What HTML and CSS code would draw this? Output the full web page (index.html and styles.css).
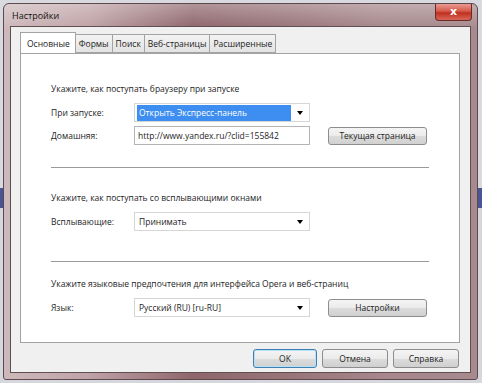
FILE: index.html
```html
<!DOCTYPE html>
<html lang="ru">
<head>
    <meta charset="UTF-8">
    <title>Настройки</title>
    <link rel="stylesheet" href="styles.css">
</head>
<body>
    <div class="window">
        <div class="titlebar">
            <span class="title">Настройки</span>
            <button class="close">x</button>
        </div>
        <div class="client">
            <ul class="tabs">
                <li class="tab active">Основные</li>
                <li class="tab">Формы</li>
                <li class="tab">Поиск</li>
                <li class="tab">Веб-страницы</li>
                <li class="tab">Расширенные</li>
            </ul>
            <div class="panel">
                <div class="section first">
                    <p class="heading">Укажите, как поступать браузеру при запуске</p>
                    <div class="row">
                        <span class="label">При запуске:</span>
                        <div class="select"><span class="value selected">Открыть Экспресс-панель</span><span class="arrow"></span></div>
                    </div>
                    <div class="row">
                        <span class="label">Домашняя:</span>
                        <div class="input">http://www.yandex.ru/?clid=155842</div>
                        <button class="btn">Текущая страница</button>
                    </div>
                </div>
                <hr class="sep">
                <div class="section second">
                    <p class="heading">Укажите, как поступать со всплывающими окнами</p>
                    <div class="row">
                        <span class="label">Всплывающие:</span>
                        <div class="select"><span class="value">Принимать</span><span class="arrow"></span></div>
                    </div>
                </div>
                <hr class="sep sep2">
                <div class="section third">
                    <p class="heading">Укажите языковые предпочтения для интерфейса Opera и веб-страниц</p>
                    <div class="row">
                        <span class="label">Язык:</span>
                        <div class="select"><span class="value">Русский (RU) [ru-RU]</span><span class="arrow"></span></div>
                        <button class="btn">Настройки</button>
                    </div>
                </div>
            </div>
            <div class="actions">
                <button class="btn default">OK</button>
                <button class="btn">Отмена</button>
                <button class="btn">Справка</button>
            </div>
        </div>
    </div>
</body>
</html>
```
FILE: styles.css
```css
body {
    margin: 0;
    width: 482px;
    height: 383px;
    overflow: hidden;
    font-family: "Open Sans", "Noto Sans", sans-serif;
    font-size: 8.5px;
    white-space: nowrap;
    color: #1e1e1e;
    background: linear-gradient(#d9dadf 0, #d9dadf 188px, #4a5597 188px, #4a5597 208px, #d6d7dc 208px);
}
.window {
    margin: 3px;
    padding: 0 6px 6px 6px;
    border-radius: 6px 6px 3px 3px;
    border: 1px solid #5e4a4e;
    width: 461px;
    height: 369px;
    background:
        linear-gradient(rgba(255,255,255,0.3), rgba(255,255,255,0) 24px),
        linear-gradient(90deg, #cdb9bb 0%, #bfa2a6 18%, #8e666c 40%, #987479 60%, #a6878b 80%, #a68a8e 100%);
    display: flex;
    flex-direction: column;
}
.titlebar {
    height: 22px;
    display: flex;
    align-items: flex-start;
    justify-content: space-between;
}
.title {
    margin: 5px 0 0 2px;
    font-size: 9px;
    color: #111;
}
.close {
    width: 37px;
    height: 17px;
    margin: 0 -1px 0 0;
    padding: 0;
    border: 1px solid #6a2a26;
    border-top: none;
    border-radius: 0 0 4px 4px;
    background: linear-gradient(#e99a90, #d45a4c 45%, #c0301f 55%, #d8675a);
    color: #fff;
    font-family: "DejaVu Sans", sans-serif;
    font-weight: bold;
    font-size: 11px;
    line-height: 14px;
}
.client {
    flex: 1;
    background: #f0f0f0;
    border: 1px solid #5f4e52;
    padding: 7px 10px 0 9px;
    display: flex;
    flex-direction: column;
}
.tabs {
    list-style: none;
    margin: 0;
    padding: 0;
    display: flex;
    height: 19px;
    position: relative;
    z-index: 1;
}
.tab {
    box-sizing: border-box;
    height: 19px;
    padding: 0 3px;
    line-height: 18px;
    border: 1px solid #a3a3a3;
    border-left: none;
    background: linear-gradient(#f3f3f3, #e3e3e3);
    color: #222;
}
.tab.active {
    height: 21px;
    margin-top: -2px;
    padding: 0 5px 0 6px;
    line-height: 22px;
    border-left: 1px solid #a3a3a3;
    border-bottom: none;
    background: #fff;
}
.panel {
    height: 290px;
    box-sizing: border-box;
    background: #fff;
    border: 1px solid #a3a3a3;
    padding: 0 30px;
}
.section.first {
    padding-top: 28px;
}
.section.second {
    padding-top: 23px;
}
.section.third {
    padding-top: 15px;
}
.heading {
    margin: 0 0 7px 0;
    line-height: 14px;
}
.row {
    display: flex;
    align-items: center;
    margin-bottom: 4px;
}
.label {
    width: 83px;
}
.select, .input {
    box-sizing: border-box;
    width: 176px;
    height: 19px;
    border: 1px solid #d6d6d6;
    background: #fff;
    display: flex;
    align-items: center;
    padding: 0 2px;
}
.input {
    border-color: #b4b4b4;
    padding: 0 3px;
}
.value {
    flex: 1;
    padding: 0 2px;
    line-height: 16px;
}
.value.selected {
    background: #3d8ef0;
    color: #fff;
}
.arrow {
    width: 0;
    height: 0;
    margin: 0 4px 0 6px;
    border-left: 3px solid transparent;
    border-right: 3px solid transparent;
    border-top: 4px solid #000;
}
.btn {
    box-sizing: border-box;
    width: 99px;
    height: 18px;
    margin-left: 18px;
    padding: 0;
    border: 1px solid #8d8d8d;
    border-radius: 3px;
    background: linear-gradient(#f4f4f4, #ebebeb 50%, #dcdcdc 50%, #d0d0d0);
    font-family: inherit;
    font-size: 8.5px;
    color: #1e1e1e;
}
.sep {
    margin: 22px 0 0 0;
    border: none;
    border-top: 1px solid #9a9a9a;
}
.sep2 {
    margin-top: 30px;
}
.actions {
    display: flex;
    justify-content: flex-end;
    gap: 5px;
    margin-top: 6px;
    margin-right: 1px;
}
.actions .btn {
    width: 66px;
    height: 19px;
    margin: 0;
}
.actions .btn.default {
    width: 64px;
    border-color: #3c7fb1;
    box-shadow: inset 0 0 0 1px #b7e1f5;
}
```
